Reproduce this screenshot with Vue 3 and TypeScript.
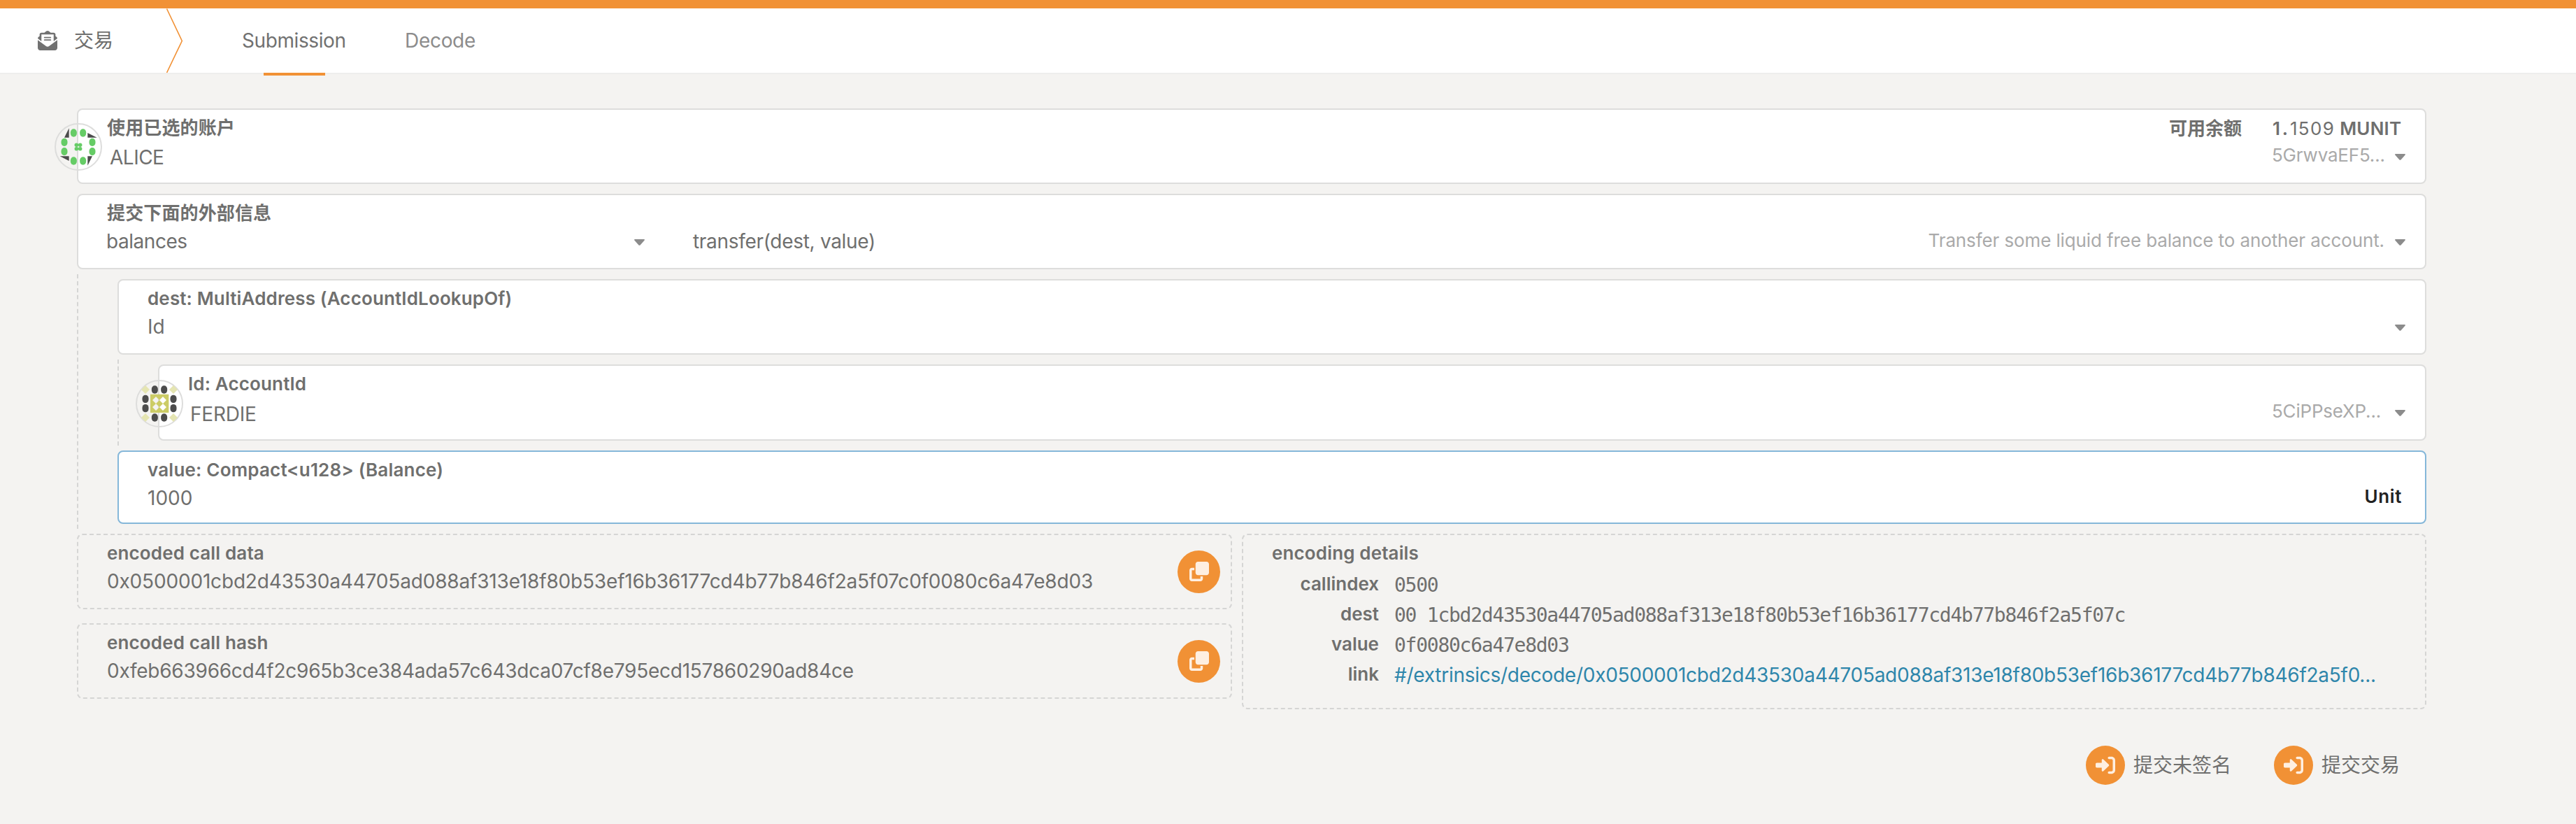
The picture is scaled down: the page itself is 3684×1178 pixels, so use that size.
<script setup lang="ts">
interface CodeBox {
  label: string
  value: string
  spacing: string
}

const codeBoxes: CodeBox[] = [
  {
    label: 'encoded call data',
    value: '0x0500001cbd2d43530a44705ad088af313e18f80b53ef16b36177cd4b77b846f2a5f07c0f0080c6a47e8d03',
    spacing: 'data'
  },
  {
    label: 'encoded call hash',
    value: '0xfeb663966cd4f2c965b3ce384ada57c643dca07cf8e795ecd157860290ad84ce',
    spacing: 'hash'
  }
]

const details = [
  { key: 'callindex', value: '0500' },
  { key: 'dest', value: '00 1cbd2d43530a44705ad088af313e18f80b53ef16b36177cd4b77b846f2a5f07c' },
  { key: 'value', value: '0f0080c6a47e8d03' }
]

const link = '#/extrinsics/decode/0x0500001cbd2d43530a44705ad088af313e18f80b53ef16b36177cd4b77b846f2a5f0...'

const actions = ['提交未签名', '提交交易']

// Centres of the eight outer ring dots shared by both identicons.
const ring: [number, number][] = [
  [-20, -60], [20, -60], [-60, -20], [60, -20],
  [-60, 20], [60, 20], [-20, 60], [20, 60]
]
const corners: [number, number][] = [[-60, -60], [60, -60], [-60, 60], [60, 60]]
</script>

<template>
  <div class="page">
    <header class="header">
      <svg class="mail" viewBox="0 0 512 512">
        <path d="M96 273.4L.2 202.500c1.600-18.100 10.900-34.900 25.700-45.800L48 140.300V96c0-26.500 21.500-48 48-48h76.600l49.900-36.900C232.200 3.900 243.900 0 256 0s23.800 3.900 33.500 11L339.400 48H416c26.500 0 48 21.500 48 48v44.300l22.100 16.400c14.800 10.900 24.100 27.700 25.700 45.800L416 273.400V96H96zM0 448V242.100L217.600 403.300c11.100 8.200 24.600 12.700 38.400 12.700s27.300-4.400 38.400-12.700L512 242.100V448c0 35.300-28.700 64-64 64H64c-35.300 0-64-28.700-64-64zM176 160H336c8.800 0 16 7.200 16 16s-7.200 16-16 16H176c-8.800 0-16-7.200-16-16s7.200-16 16-16zm0 64H336c8.800 0 16 7.200 16 16s-7.200 16-16 16H176c-8.800 0-16-7.200-16-16s7.200-16 16-16z" />
      </svg>
      <span class="title">交易</span>
      <svg class="chevron" viewBox="0 0 24 92">
        <path d="M0.500 0.500L22.300 46.500L0.500 92" />
      </svg>
      <a class="tab active">Submission</a>
      <a class="tab">Decode</a>
    </header>

    <main class="main">
      <section class="card">
        <svg class="identicon" viewBox="-102 -102 204 204">
          <circle class="halo" r="99" />
          <g fill="#66cc66">
            <rect v-for="([x, y], i) in ring" :key="i" :x="x - 13.5" :y="y - 17" width="27" height="34" rx="13.500" ry="15" />
            <circle cx="-8" cy="-8" r="8.300" />
            <circle cx="8" cy="-8" r="8.300" />
            <circle cx="-8" cy="8" r="8.300" />
            <circle cx="8" cy="8" r="8.300" />
          </g>
          <path fill="#4c4c4c" d="M-40-80V-40H-60zM40-60V-40H80zM40 40H60L40 80zM-79 40H-40V60z" />
        </svg>
        <div class="row">
          <span class="label">使用已选的账户</span>
          <span class="balance-label">可用余额</span>
          <span class="balance"><b class="whole">1.</b><span class="frac">1509</span><b> MUNIT</b></span>
        </div>
        <div class="row values">
          <span class="value name alice">ALICE</span>
          <span class="side address">5GrwvaEF5...</span>
          <svg class="caret" viewBox="0 0 15 9"><path d="M1 0H14Q15.500 .5 14.500 1.700L8.500 8.400Q7.500 9.300 6.500 8.400L.5 1.700Q-.5 .5 1 0z" /></svg>
        </div>
      </section>

      <section class="card">
        <div class="row"><span class="label">提交下面的外部信息</span></div>
        <div class="row values">
          <div class="module">
            <span class="value balances">balances</span>
            <svg class="caret" viewBox="0 0 15 9"><path d="M1 0H14Q15.500 .5 14.500 1.700L8.500 8.400Q7.500 9.300 6.500 8.400L.5 1.700Q-.5 .5 1 0z" /></svg>
          </div>
          <span class="value method">transfer(dest, value)</span>
          <span class="side hint">Transfer some liquid free balance to another account.</span>
          <svg class="caret" viewBox="0 0 15 9"><path d="M1 0H14Q15.500 .5 14.500 1.700L8.500 8.400Q7.500 9.300 6.500 8.400L.5 1.700Q-.5 .5 1 0z" /></svg>
        </div>
      </section>

      <div class="params">
        <section class="card">
          <div class="row"><span class="label">dest: MultiAddress (AccountIdLookupOf)</span></div>
          <div class="row values">
            <span class="value grow">Id</span>
            <svg class="caret" viewBox="0 0 15 9"><path d="M1 0H14Q15.500 .5 14.500 1.700L8.500 8.400Q7.500 9.300 6.500 8.400L.5 1.700Q-.5 .5 1 0z" /></svg>
          </div>
        </section>

        <div class="params inner">
          <section class="card account">
            <svg class="identicon lower" viewBox="-102 -102 204 204">
              <circle class="halo" r="99" />
              <rect v-for="([x, y], i) in ring" :key="i" fill="#4c4c4c" :x="x - 13.5" :y="y - 17" width="27" height="34" rx="13" ry="14" />
              <path v-for="([x, y], i) in corners" :key="'c' + i" fill="#e5e5b2" :d="`M${x} ${y - 18}L${x + 18} ${y}L${x} ${y + 18}L${x - 18} ${y}z`" />
              <path fill="#cccc66" fill-rule="evenodd" d="M-39-40H40V39H-39zM-15-30L0-15L-15 0L-30-15zM15-30L30-15L15 0L0-15zM-15 0L0 15L-15 30L-30 15zM15 0L30 15L15 30L0 15z" />
            </svg>
            <div class="row"><span class="label">Id: AccountId</span></div>
            <div class="row values">
              <span class="value name ferdie">FERDIE</span>
              <span class="side address">5CiPPseXP...</span>
              <svg class="caret" viewBox="0 0 15 9"><path d="M1 0H14Q15.500 .5 14.500 1.700L8.500 8.400Q7.500 9.300 6.500 8.400L.5 1.700Q-.5 .5 1 0z" /></svg>
            </div>
          </section>
        </div>

        <section class="card focused">
          <div class="row"><span class="label amount">value: Compact&lt;u128&gt; (Balance)</span></div>
          <div class="row values">
            <span class="value grow">1000</span>
            <span class="unit">Unit</span>
          </div>
        </section>
      </div>

      <div class="outputs">
        <div class="codes">
          <section v-for="box in codeBoxes" :key="box.label" class="box code">
            <div class="code-text">
              <div class="label">{{ box.label }}</div>
              <div class="value code-value" :class="box.spacing">{{ box.value }}</div>
            </div>
            <button class="copy">
              <svg viewBox="0 0 512 512"><path d="M288 448H64V224h64V160H64c-35.300 0-64 28.700-64 64V448c0 35.300 28.700 64 64 64H288c35.300 0 64-28.700 64-64V384H288v64zm-64-96H448c35.300 0 64-28.700 64-64V64c0-35.300-28.700-64-64-64H224c-35.300 0-64 28.700-64 64V288c0 35.300 28.700 64 64 64z" /></svg>
            </button>
          </section>
        </div>
        <section class="box encoding">
          <div class="label">encoding details</div>
          <dl class="details">
            <template v-for="d in details" :key="d.key">
              <dt>{{ d.key }}</dt>
              <dd class="mono">{{ d.value }}</dd>
            </template>
            <dt>link</dt>
            <dd class="link">{{ link }}</dd>
          </dl>
        </section>
      </div>

      <div class="actions">
        <button v-for="a in actions" :key="a" class="action">
          <span class="disc">
            <svg viewBox="0 0 512 512"><path d="M344.700 238.500l-144.100-136C193.700 95.970 183.400 94.170 174.600 97.950C165.800 101.800 160.100 110.400 160.100 120V192H32.020C14.330 192 0 206.300 0 224v64c0 17.680 14.330 32 32.020 32h128.100v72c0 9.578 5.707 18.250 14.510 22.050c8.803 3.781 19.030 1.984 26-4.594l144.100-136C354.300 264.600 354.300 247.400 344.700 238.500zM416 32h-64c-17.670 0-32 14.330-32 32s14.330 32 32 32h64c17.670 0 32 14.330 32 32v256c0 17.670-14.330 32-32 32h-64c-17.670 0-32 14.330-32 32s14.330 32 32 32h64c53.020 0 96-42.980 96-96V128C512 74.980 469 32 416 32z" /></svg>
          </span>
          <span>{{ a }}</span>
        </button>
      </div>
    </main>
  </div>
</template>

<style>
body {
  background: #f4f3f1;
}
</style>

<style scoped>
.page {
  box-sizing: border-box;
  min-height: 1178px;
  border-top: 12px solid #f19135;
  background: #f4f3f1;
  color: #6f6f6e;
  font: 400 28px/32px Inter, 'Noto Sans CJK SC', sans-serif;
}
button {
  padding: 0;
  border: 0;
  background: none;
  color: inherit;
  font: inherit;
}
.header {
  display: flex;
  align-items: center;
  height: 92px;
  padding-left: 54px;
  border-bottom: 2px solid #eeeeed;
  background: #fff;
}
.mail {
  width: 28px;
  height: 28px;
  margin-right: 24px;
  fill: #717171;
}
.title {
  width: 132px;
}
.chevron {
  width: 24px;
  height: 92px;
  margin-right: 84px;
  fill: none;
  stroke: #f19135;
  stroke-width: 1.6;
}
.tab {
  position: relative;
  width: 150px;
  margin-right: 83px;
  line-height: 92px;
  letter-spacing: -0.3px;
  color: #8c8c8c;
}
.tab.active {
  letter-spacing: -0.4px;
  color: #717171;
}
.tab.active::after {
  content: '';
  position: absolute;
  left: 31px;
  bottom: -4px;
  width: 88px;
  height: 4px;
  background: #f19135;
}
.main {
  width: 3360px;
  padding: 49px 0 0 110px;
}
.card {
  position: relative;
  box-sizing: border-box;
  height: 108px;
  padding: 12px 28px 0 41px;
  border: 2px solid #dddddc;
  border-radius: 8px;
  background: #fff;
}
.card + .card {
  margin-top: 14px;
}
.card.account {
  height: 109px;
}
.card.focused {
  height: 105px;
  margin-top: 7px;
  border-color: #85b7d9;
}
.identicon {
  position: absolute;
  left: -34px;
  top: 19px;
  width: 68px;
  height: 68px;
}
.identicon.lower {
  top: 20px;
}
.halo {
  fill: none;
  stroke: #dddddc;
  stroke-width: 6;
}
.row {
  display: flex;
  height: 28px;
}
.row.values {
  height: 32px;
  margin-top: 10px;
}
.label {
  flex: 1;
  font-size: 26px;
  font-weight: 600;
  line-height: 28px;
  letter-spacing: 0.14px;
  white-space: nowrap;
}
.label.amount {
  letter-spacing: 0.2px;
}
.balance-label {
  width: 104px;
  margin-right: 44px;
  font-size: 26px;
  font-weight: 600;
  line-height: 30px;
  white-space: nowrap;
}
.balance {
  width: 190px;
  font-size: 26px;
  line-height: 30px;
  white-space: nowrap;
}
.balance b {
  font-weight: 600;
  letter-spacing: 0.2px;
}
.balance .whole {
  letter-spacing: 2.800px;
}
.balance .frac {
  letter-spacing: 1.400px;
}
.value {
  white-space: nowrap;
}
.name {
  flex: 1;
}
.alice {
  margin: 2px 0 0 4px;
  letter-spacing: -0.5px;
}
.ferdie {
  margin: 3px 0 0 3px;
  letter-spacing: -0.2px;
}
.grow {
  flex: 1;
}
.module {
  display: flex;
  justify-content: space-between;
  width: 769px;
  margin-right: 69px;
}
.balances {
  margin-left: -1px;
  letter-spacing: -0.45px;
}
.method {
  flex: 1;
  letter-spacing: -0.3px;
}
.side {
  margin-top: -1px;
  font-size: 26px;
  color: #aaa;
  white-space: nowrap;
}
.address {
  width: 176px;
  letter-spacing: -0.2px;
}
.hint {
  margin-right: 15px;
  letter-spacing: -0.11px;
}
.caret {
  width: 15px;
  height: 9px;
  margin-top: 13px;
  fill: #8c8c8c;
}
.unit {
  margin: -2px 5px 0 0;
  font-size: 26px;
  font-weight: 600;
  letter-spacing: 0.6px;
  color: #222;
}
.params {
  margin-top: 7px;
  padding: 7px 0 7px 56px;
  border-left: 2px dashed #d5d5d4;
}
.outputs {
  display: flex;
  justify-content: space-between;
  align-items: flex-start;
  margin-top: 7px;
}
.codes {
  display: flex;
  flex-direction: column;
  gap: 20px;
  width: 1652px;
}
.box {
  box-sizing: border-box;
  padding: 12px 28px 0 41px;
  border: 2px dashed #d5d5d4;
  border-radius: 8px;
}
.code {
  display: flex;
  align-items: center;
  height: 108px;
  padding: 0 15px 0 41px;
}
.code-text {
  flex: 1;
  align-self: flex-start;
  padding-top: 12px;
}
.code-value {
  margin-top: 10px;
}
.data {
  letter-spacing: -0.175px;
}
.hash {
  letter-spacing: -0.25px;
}
.copy {
  display: flex;
  align-items: center;
  justify-content: center;
  width: 61px;
  height: 61px;
  border-radius: 50%;
  background: #f19135;
}
.copy svg,
.disc svg {
  width: 28px;
  height: 28px;
  fill: #feefe1;
}
.encoding {
  width: 1694px;
  height: 251px;
}
.details {
  display: grid;
  grid-template-columns: 153px 1fr;
  grid-auto-rows: 43px;
  column-gap: 22px;
  margin: 8px 0 0;
}
dt {
  font-size: 26px;
  font-weight: 600;
  line-height: 43px;
  text-align: right;
}
dd {
  margin: 2px 0 0;
  line-height: 43px;
  white-space: nowrap;
}
.mono {
  font-family: 'DejaVu Sans Mono', monospace;
  font-size: 28px;
  letter-spacing: -1.26px;
}
.link {
  color: #2e86ab;
  letter-spacing: -0.265px;
}
.actions {
  display: flex;
  justify-content: flex-end;
  gap: 61px;
  margin: 52px 38px 0 0;
}
.action {
  display: flex;
  align-items: center;
  gap: 12px;
  line-height: 56px;
}
.disc {
  display: flex;
  align-items: center;
  justify-content: center;
  width: 56px;
  height: 56px;
  border-radius: 50%;
  background: #f19135;
}
</style>
